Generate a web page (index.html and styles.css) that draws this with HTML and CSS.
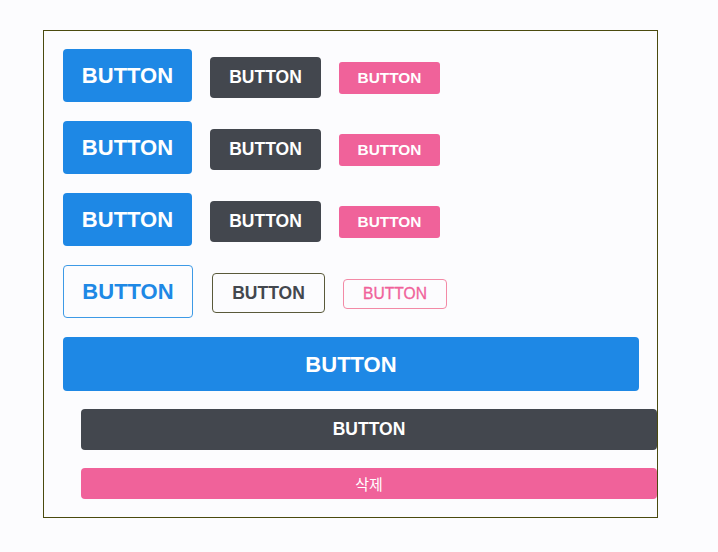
FILE: index.html
```html
<!DOCTYPE html>
<html lang="ko">
<head>
<meta charset="utf-8">
<title>Buttons</title>
<link rel="stylesheet" href="styles.css">
</head>
<body>
<div class="box">
  <div class="row">
    <button class="btn lg blue">BUTTON</button>
    <button class="btn md dark">BUTTON</button>
    <button class="btn sm pink">BUTTON</button>
  </div>
  <div class="row">
    <button class="btn lg blue">BUTTON</button>
    <button class="btn md dark">BUTTON</button>
    <button class="btn sm pink">BUTTON</button>
  </div>
  <div class="row">
    <button class="btn lg blue">BUTTON</button>
    <button class="btn md dark">BUTTON</button>
    <button class="btn sm pink">BUTTON</button>
  </div>
  <div class="row outline-row">
    <button class="btn lg-o o-blue">BUTTON</button>
    <button class="btn md-o o-dark">BUTTON</button>
    <button class="btn sm-o o-pink">BUTTON</button>
  </div>
  <button class="btn full-lg blue">BUTTON</button>
  <button class="btn full-md dark">BUTTON</button>
  <button class="btn full-sm pink">삭제</button>
</div>
</body>
</html>
```

FILE: styles.css
```css
html, body {
  margin: 0;
  padding: 0;
  background: #fcfcfe;
}
body {
  font-family: "Liberation Sans", Arial, "Noto Sans CJK KR", sans-serif;
}
.box {
  margin: 30px 0 0 43px;
  width: 576px;
  padding: 18px 18px 18px 19px;
  border: 1px solid #4a4a0e;
  display: flex;
  flex-direction: column;
  align-items: flex-start;
}
.row {
  display: flex;
  align-items: baseline;
  gap: 18px;
  height: 53px;
  margin-bottom: 19px;
}
.outline-row .lg-o {
  margin-right: 1px;
}
.btn {
  font-family: "Liberation Sans", Arial, "Noto Sans CJK KR", sans-serif;
  font-weight: bold;
  color: #fff;
  border: 0;
  margin: 0;
  display: block;
  text-align: center;
  box-sizing: border-box;
  cursor: pointer;
}
.blue { background: #1e88e5; }
.dark { background: #43474e; }
.pink { background: #f0629a; }
.lg {
  width: 129px;
  font-size: 22px;
  line-height: 25px;
  padding: 14px 0;
  border-radius: 4px;
}
.md {
  width: 111px;
  font-size: 17.5px;
  line-height: 21px;
  padding: 10px 0;
  border-radius: 4px;
}
.sm {
  width: 101px;
  font-size: 15.4px;
  line-height: 18px;
  padding: 7px 0;
  border-radius: 3px;
}
.lg-o {
  width: 130px;
  font-size: 22px;
  line-height: 25px;
  padding: 13px 0;
  border-radius: 4px;
  background: transparent;
  border: 1px solid #3d9ae6;
  color: #1e88e5;
}
.md-o {
  width: 113px;
  font-size: 17.5px;
  line-height: 20px;
  padding: 9px 0;
  border-radius: 4px;
  background: transparent;
  border: 1px solid #5a5a3a;
  color: #43474e;
}
.sm-o {
  width: 104px;
  font-size: 15.6px;
  font-weight: normal;
  line-height: 18px;
  padding: 5px 0;
  border-radius: 4px;
  background: transparent;
  border: 1px solid #f38aa6;
  color: #f0629a;
  -webkit-text-stroke: 0.3px #f0629a;
}
.full-lg {
  width: 576px;
  height: 54px;
  font-size: 22px;
  line-height: 25px;
  border-radius: 4px;
  margin-bottom: 18px;
}
.full-md {
  width: 576px;
  height: 41px;
  font-size: 17.5px;
  line-height: 21px;
  border-radius: 4px;
  margin-left: 18px;
  margin-bottom: 18px;
}
.full-sm {
  width: 576px;
  height: 31px;
  font-size: 15px;
  font-weight: normal;
  line-height: 18px;
  border-radius: 4px;
  margin-left: 18px;
  font-family: "Noto Sans CJK KR", "Liberation Sans", sans-serif;
}
```
